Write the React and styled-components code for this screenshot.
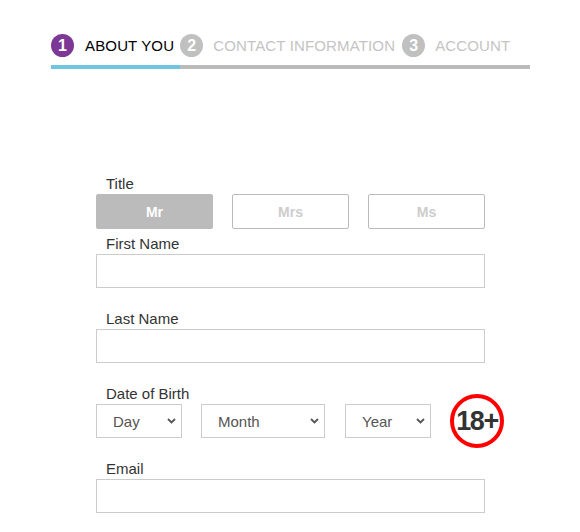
import React from "react";
import styled, { createGlobalStyle } from "styled-components";

const Global = createGlobalStyle`
  html, body { margin: 0; padding: 0; background: #fff; }
  body { font-family: "Liberation Sans", Arial, sans-serif; }
  * { box-sizing: border-box; }
`;

const Page = styled.div`
  width: 580px;
  height: 532px;
  overflow: hidden;
  padding-top: 34px;
`;

const Stepper = styled.div`
  margin-left: 51px;
  width: 479px;
`;

const Steps = styled.div`
  display: flex;
  align-items: center;
  height: 23px;
`;

const StepNum = styled.span`
  width: 23px;
  height: 23px;
  border-radius: 50%;
  background: ${(p) => (p.$active ? "#7d3895" : "#c0c0c0")};
  color: #fff;
  font-weight: bold;
  font-size: 16px;
  display: flex;
  align-items: center;
  justify-content: center;
  margin-right: ${(p) => p.$mr ?? 11}px;
  flex: none;
`;

const StepLabel = styled.span`
  font-size: 15px;
  line-height: 17px;
  margin-top: -1px;
  letter-spacing: 0.15px;
  color: ${(p) => (p.$active ? "#000" : "#c4c4c4")};
  margin-right: ${(p) => p.$mr ?? 7}px;
  white-space: nowrap;
`;

const Bar = styled.div`
  margin-top: 8px;
  height: 4px;
  background: #bbbbbb;
  display: flex;
`;

const BarFill = styled.div`
  height: 100%;
  background: #6ec6e2;
`;

const Form = styled.form`
  margin: 106px 0 0 96px;
  width: 389px;
`;

const Group = styled.div`
  margin-bottom: ${(p) => p.$gap ?? 22}px;
`;

const Label = styled.label`
  display: block;
  font-size: 15px;
  line-height: 17px;
  color: #333;
  padding-left: 10px;
  margin-bottom: 2px;
`;

const TitleRow = styled.div`
  display: flex;
  gap: 19px;
`;

const TitleButton = styled.button`
  width: 117px;
  height: 35px;
  border: 1px solid #bbb;
  border-radius: 2px;
  background: ${(p) => (p.$selected ? "#bbb" : "#fff")};
  color: ${(p) => (p.$selected ? "#fff" : "#ccc")};
  font-family: "Liberation Sans", Arial, sans-serif;
  font-weight: bold;
  font-size: 14px;
  padding: 0;
`;

const TextInput = styled.input`
  display: block;
  width: 389px;
  height: 34px;
  border: 1px solid #ccc;
  background: #fff;
  outline: none;
`;

const DobRow = styled.div`
  display: flex;
  align-items: center;
  height: 34px;
`;

const SelectWrap = styled.div`
  position: relative;
  flex: none;
  width: ${(p) => p.$w}px;
  height: 34px;
  margin-right: ${(p) => p.$mr ?? 0}px;
`;

const Select = styled.select`
  appearance: none;
  width: 100%;
  height: 100%;
  border: 1px solid #ccc;
  border-radius: 0;
  background: #fff;
  color: #555;
  font-family: "Liberation Sans", Arial, sans-serif;
  font-size: 15px;
  padding-left: 16px;
  outline: none;
`;

const Chevron = styled.svg`
  position: absolute;
  right: 6px;
  top: 14px;
  pointer-events: none;
`;

const AgeBadge = styled.div`
  flex: none;
  width: 54px;
  height: 54px;
  margin: -10px 0;
  border-radius: 50%;
  border: 4px solid #ff0000;
  display: flex;
  align-items: center;
  justify-content: center;
  font-weight: bold;
  font-size: 27px;
  letter-spacing: -1.5px;
  color: #333;
`;

function Dropdown({ w, mr, label }) {
  return (
    <SelectWrap $w={w} $mr={mr}>
      <Select defaultValue="">
        <option value="">{label}</option>
      </Select>
      <Chevron width="9" height="6" viewBox="0 0 9 6">
        <path d="M1 1 L4.5 4.5 L8 1" fill="none" stroke="#555" strokeWidth="1.8" />
      </Chevron>
    </SelectWrap>
  );
}

export default function App() {
  return (
    <Page>
      <Global />
      <Stepper>
        <Steps>
          <StepNum $active>1</StepNum>
          <StepLabel $active $mr={6}>ABOUT YOU</StepLabel>
          <StepNum $mr={10}>2</StepNum>
          <StepLabel>CONTACT INFORMATION</StepLabel>
          <StepNum $mr={10}>3</StepNum>
          <StepLabel>ACCOUNT</StepLabel>
        </Steps>
        <Bar>
          <BarFill style={{ width: "129px" }} />
        </Bar>
      </Stepper>
      <Form onSubmit={(e) => e.preventDefault()}>
        <Group $gap={6}>
          <Label>Title</Label>
          <TitleRow>
            <TitleButton type="button" $selected>Mr</TitleButton>
            <TitleButton type="button">Mrs</TitleButton>
            <TitleButton type="button">Ms</TitleButton>
          </TitleRow>
        </Group>
        <Group>
          <Label>First Name</Label>
          <TextInput type="text" />
        </Group>
        <Group>
          <Label>Last Name</Label>
          <TextInput type="text" />
        </Group>
        <Group $gap={22}>
          <Label>Date of Birth</Label>
          <DobRow>
            <Dropdown w={86} mr={19} label="Day" />
            <Dropdown w={124} mr={20} label="Month" />
            <Dropdown w={86} mr={19} label="Year" />
            <AgeBadge>18+</AgeBadge>
          </DobRow>
        </Group>
        <Group>
          <Label>Email</Label>
          <TextInput type="email" />
        </Group>
      </Form>
    </Page>
  );
}
